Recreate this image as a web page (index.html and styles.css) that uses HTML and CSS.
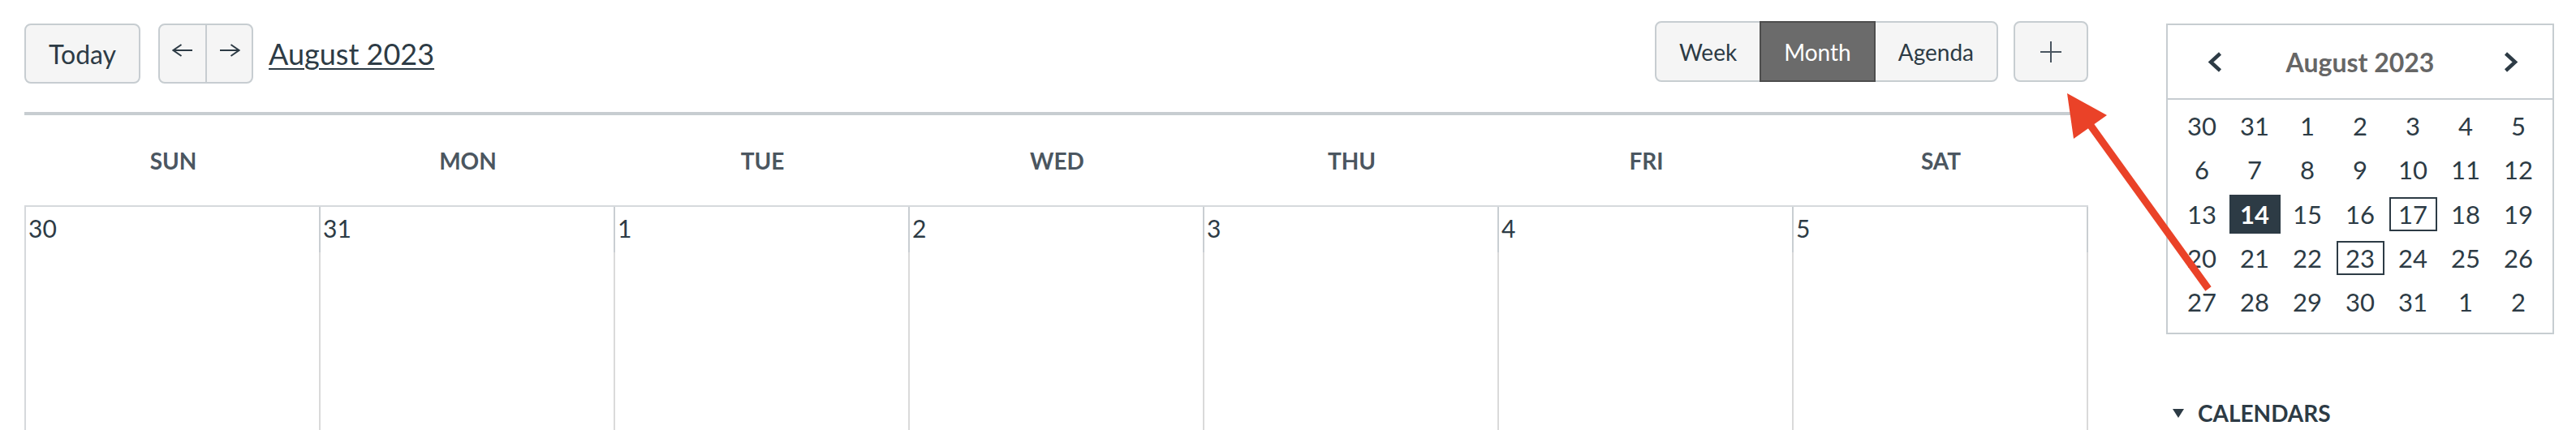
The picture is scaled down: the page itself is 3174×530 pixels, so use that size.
FILE: index.html
```html
<!DOCTYPE html>
<html lang="en">
<head>
<meta charset="utf-8">
<title>Calendar</title>
<link rel="stylesheet" href="styles.css">
</head>
<body>
<div class="page">
  <main class="main">
    <header class="toolbar">
      <div class="tb-left">
        <button class="btn today">Today</button>
        <div class="btn nav">
          <span class="nav-btn"><svg width="26" height="16" viewBox="0 0 26 16"><path d="M25 8H1.5M11.5 1L1.5 8L11.5 15" fill="none" stroke="#2d3b45" stroke-width="2"/></svg></span>
          <span class="nav-btn"><svg width="26" height="16" viewBox="0 0 26 16"><path d="M1 8H24.5M14.5 1L24.5 8L14.5 15" fill="none" stroke="#2d3b45" stroke-width="2"/></svg></span>
        </div>
        <a class="title" href="#">August 2023</a>
      </div>
      <div class="tb-right">
        <div class="btn views">
          <span class="view">Week</span>
          <span class="view active">Month</span>
          <span class="view">Agenda</span>
        </div>
        <button class="btn plus"><svg width="26" height="26" viewBox="0 0 26 26"><path d="M13 0V26M0 13H26" fill="none" stroke="#4a5560" stroke-width="2"/></svg></button>
      </div>
    </header>
    <div class="dayheads">
      <span>SUN</span><span>MON</span><span>TUE</span><span>WED</span><span>THU</span><span>FRI</span><span>SAT</span>
    </div>
    <div class="grid">
      <div class="cell"><div class="num">30</div><div class="fill"></div></div>
      <div class="cell"><div class="num">31</div><div class="fill"></div></div>
      <div class="cell"><div class="num">1</div><div class="fill"></div></div>
      <div class="cell"><div class="num">2</div><div class="fill"></div></div>
      <div class="cell"><div class="num">3</div><div class="fill"></div></div>
      <div class="cell"><div class="num">4</div><div class="fill"></div></div>
      <div class="cell"><div class="num">5</div><div class="fill"></div></div>
    </div>
  </main>
  <aside class="side">
    <div class="minical">
      <div class="mc-head">
        <svg class="chev chev-l" width="18" height="25" viewBox="0 0 18 25"><path d="M15.5 2L4 12.5L15.5 23" fill="none" stroke="#2d3b45" stroke-width="4.5"/></svg>
        <span class="mc-title">August 2023</span>
        <svg class="chev chev-r" width="18" height="25" viewBox="0 0 18 25"><path d="M2.5 2L14 12.5L2.5 23" fill="none" stroke="#2d3b45" stroke-width="4.5"/></svg>
      </div>
      <div class="mc-body">
        <span>30</span><span>31</span><span>1</span><span>2</span><span>3</span><span>4</span><span>5</span>
        <span>6</span><span>7</span><span>8</span><span>9</span><span>10</span><span>11</span><span>12</span>
        <span>13</span><span><b class="cur">14</b></span><span>15</span><span>16</span><span><b class="boxed">17</b></span><span>18</span><span>19</span>
        <span>20</span><span>21</span><span>22</span><span><b class="boxed">23</b></span><span>24</span><span>25</span><span>26</span>
        <span>27</span><span>28</span><span>29</span><span>30</span><span>31</span><span>1</span><span>2</span>
      </div>
    </div>
    <div class="cal-section"><span class="tri"></span>CALENDARS</div>
  </aside>
  <svg class="annot" width="3174" height="530" viewBox="0 0 3174 530">
    <line x1="2721" y1="356" x2="2574" y2="152" stroke="#ea4228" stroke-width="9"/>
    <polygon points="2547,115 2555,171 2596,142" fill="#ea4228"/>
  </svg>
</div>
</body>
</html>
```

FILE: styles.css
```css
html, body {
  margin: 0;
  padding: 0;
  background: #fff;
  overflow: hidden;
  height: 530px;
}
body {
  font-family: "Lato", "Liberation Sans", sans-serif;
  color: #2d3b45;
}
.page {
  display: flex;
  align-items: flex-start;
  gap: 96px;
  padding-left: 30px;
  height: 530px;
  overflow: hidden;
}
.main {
  width: 2543px;
  flex: none;
}
.toolbar {
  display: flex;
  justify-content: space-between;
  align-items: flex-start;
  height: 142px;
  box-sizing: border-box;
  padding-top: 26px;
  border-bottom: 4px solid #c7cdd1;
}
.tb-left {
  display: flex;
  align-items: center;
  margin-top: 3px;
}
.btn {
  font-family: "Lato", "Liberation Sans", sans-serif;
  background: #f5f5f5;
  border: 2px solid #c7cdd1;
  border-radius: 8px;
  color: #2d3b45;
  box-sizing: border-box;
  margin: 0;
}
.today {
  height: 74px;
  padding: 0 28px;
  font-size: 32px;
  margin-right: 22px;
}
.nav {
  display: flex;
  height: 74px;
  width: 117px;
  margin-right: 19px;
  padding: 0;
}
.nav-btn {
  width: 56px;
  display: flex;
  align-items: center;
  justify-content: center;
}
.nav-btn svg {
  margin-bottom: 8px;
}
.nav-btn + .nav-btn {
  width: 55px;
  border-left: 2px solid #c7cdd1;
}
.title {
  font-size: 36px;
  color: #2d3b45;
  text-decoration: underline;
  text-decoration-thickness: 2px;
  text-underline-offset: 4px;
}
.tb-right {
  display: flex;
  align-items: flex-start;
}
.views {
  display: flex;
  height: 75px;
  padding: 0;
}
.view {
  display: flex;
  align-items: center;
  padding: 0 28px;
  font-size: 28px;
}
.view.active {
  margin: -2px 0;
  background: #6b6b6b;
  border: 2px solid #4d4d4d;
  color: #fff;
}
.plus {
  width: 92px;
  height: 75px;
  margin-left: 19px;
  display: flex;
  align-items: center;
  justify-content: center;
  padding: 0;
}
.dayheads {
  display: grid;
  grid-template-columns: repeat(7, 1fr);
  height: 111px;
  align-items: center;
  padding-left: 2px;
  font-size: 28px;
  font-weight: 700;
  color: #4b5660;
  text-align: center;
}
.grid {
  display: grid;
  grid-template-columns: repeat(7, 1fr);
  border-top: 2px solid #d6d9dc;
  border-left: 2px solid #d6d9dc;
}
.num {
  height: 56px;
  box-sizing: border-box;
  padding: 8px 0 0 3px;
  font-size: 30px;
  line-height: 36px;
  border-right: 2px solid #c9ced2;
}
.fill {
  height: 219px;
  border-right: 2px solid #dadada;
}
.side {
  width: 478px;
  flex: none;
  margin-top: 29px;
}
.minical {
  border: 2px solid #c7cdd1;
}
.mc-head {
  display: grid;
  grid-template-columns: 1fr auto 1fr;
  align-items: center;
  height: 92px;
  box-sizing: border-box;
  border-bottom: 2px solid #c7cdd1;
}
.chev-l {
  justify-self: start;
  margin-left: 49px;
}
.chev-r {
  justify-self: end;
  margin-right: 42px;
}
.mc-title {
  font-size: 32px;
  font-weight: 700;
  color: #666;
}
.mc-body {
  display: grid;
  grid-template-columns: repeat(7, 65px);
  grid-auto-rows: 54.25px;
  justify-content: center;
  padding: 5px 0 10.75px;
}
.mc-body span {
  display: flex;
  align-items: center;
  justify-content: center;
  font-size: 31px;
}
.mc-body b {
  display: flex;
  align-items: center;
  justify-content: center;
  box-sizing: border-box;
  font-weight: 400;
}
.mc-body .cur {
  width: 63px;
  height: 48px;
  background: #2d3b45;
  color: #fff;
  font-weight: 700;
}
.mc-body .boxed {
  width: 59px;
  height: 42px;
  border: 2px solid #2d3b45;
}
.cal-section {
  display: flex;
  align-items: center;
  margin-top: 80px;
  padding-left: 8px;
  font-size: 28px;
  line-height: 34px;
  font-weight: 700;
  color: #2d3b45;
}
.tri {
  width: 0;
  height: 0;
  border-left: 7px solid transparent;
  border-right: 7px solid transparent;
  border-top: 11px solid #2d3b45;
  margin-right: 17px;
}
.annot {
  position: absolute;
  left: 0;
  top: 0;
  pointer-events: none;
}
```
